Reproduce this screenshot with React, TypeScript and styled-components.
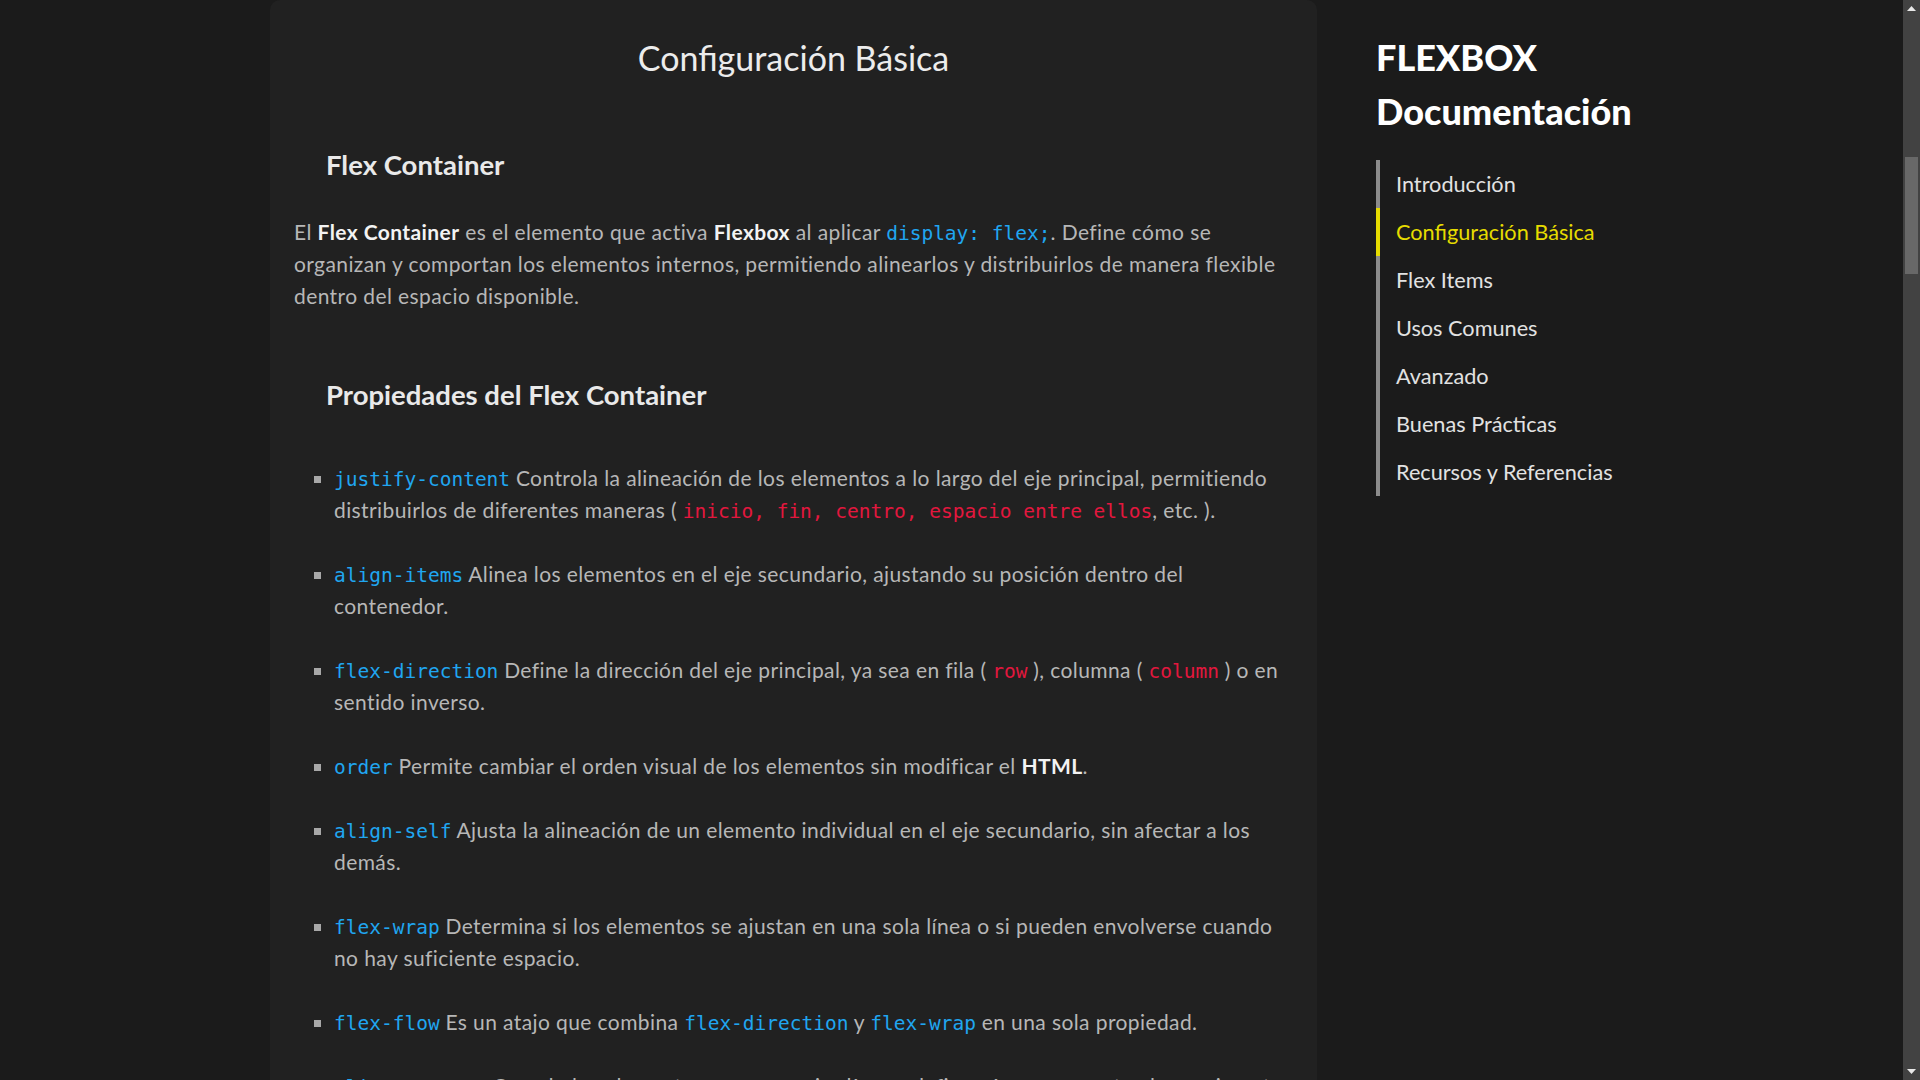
import React from "react";
import styled, { createGlobalStyle } from "styled-components";

const GlobalStyle = createGlobalStyle`
  html, body {
    margin: 0;
    padding: 0;
    background: #1b1b1b;
    overflow: hidden;
  }
  body {
    font-family: Lato, "Noto Sans", sans-serif;
  }
`;

const Page = styled.div`
  display: flex;
  height: 100vh;
  width: 100vw;
  overflow: hidden;
  background: #1b1b1b;
`;

const Main = styled.main`
  flex: 0 0 auto;
  padding-left: 270px;
`;

const Panel = styled.article`
  width: 1047px;
  box-sizing: border-box;
  min-height: 100vh;
  background: #212121;
  border-radius: 10px 10px 0 0;
  padding: 36px 24px 0 24px;
`;

const Title = styled.h2`
  margin: 0;
  text-align: center;
  font-family: Lato, sans-serif;
  font-weight: 400;
  font-size: 34px;
  line-height: 43px;
  color: #ececec;
`;

const SubTitle = styled.h3<{ $gap: number }>`
  margin: ${(p) => p.$gap}px 0 0 32px;
  font-family: Lato, sans-serif;
  font-weight: 700;
  font-size: 27.5px;
  line-height: 35px;
  color: #e9e9e9;
`;

const Paragraph = styled.p`
  margin: 34px 0 0 0;
  font-size: 21px;
  letter-spacing: 0.4px;
  line-height: 32px;
  color: #b7b7b7;
`;

const Strong = styled.strong`
  font-weight: 700;
  color: #f3f3f3;
`;

const Code = styled.code<{ $tone?: "blue" | "red" }>`
  font-family: "DejaVu Sans Mono", "Liberation Mono", monospace;
  font-size: 19.5px;
  line-height: 1;
  letter-spacing: 0;
  color: ${(p) => (p.$tone === "red" ? "#e3173e" : "#20a6f0")};
`;

const List = styled.ul`
  margin: 50px 0 0 0;
  padding-left: 40px;
  list-style: square;
`;

const Item = styled.li`
  font-size: 21px;
  letter-spacing: 0.4px;
  line-height: 32px;
  color: #b7b7b7;
  margin-bottom: 32px;
  &::marker {
    color: #a8a8a8;
    font-size: 20px;
  }
`;

const Sidebar = styled.aside`
  flex: 1 1 auto;
  margin-left: 59px;
  padding-top: 30px;
`;

const Brand = styled.h1`
  margin: 0;
  font-family: Lato, sans-serif;
  font-weight: 900;
  font-size: 36px;
  line-height: 54px;
  color: #ffffff;
`;

const Nav = styled.nav`
  margin-top: 22px;
  display: flex;
  flex-direction: column;
`;

const NavLink = styled.a<{ $active?: boolean }>`
  display: flex;
  align-items: center;
  height: 48px;
  padding-left: 16px;
  border-left: 4px solid ${(p) => (p.$active ? "#e6dc00" : "#8c8c8c")};
  font-size: 21.7px;
  color: ${(p) => (p.$active ? "#e6dc00" : "#e2e2e2")};
  text-decoration: none;
  width: max-content;
`;

const ScrollTrack = styled.div`
  flex: 0 0 17px;
  background: #424242;
  display: flex;
  flex-direction: column;
  align-items: center;
`;

const ArrowButton = styled.div`
  height: 17px;
  width: 17px;
  display: flex;
  align-items: center;
  justify-content: center;
`;

const Thumb = styled.div`
  margin-top: 140px;
  width: 13px;
  height: 117px;
  background: #686868;
`;

const Spacer = styled.div`
  flex: 1;
`;

const navItems = [
  "Introducción",
  "Configuración Básica",
  "Flex Items",
  "Usos Comunes",
  "Avanzado",
  "Buenas Prácticas",
  "Recursos y Referencias",
];

export default function App() {
  return (
    <>
      <GlobalStyle />
      <Page>
        <Main>
          <Panel>
            <Title>Configuración Básica</Title>
            <SubTitle $gap={68}>Flex Container</SubTitle>
            <Paragraph>
              El <Strong>Flex Container</Strong> es el elemento que activa{" "}
              <Strong>Flexbox</Strong> al aplicar <Code>display: flex;</Code>. Define cómo se
              organizan y comportan los elementos internos, permitiendo alinearlos y distribuirlos
              de manera flexible dentro del espacio disponible.
            </Paragraph>
            <SubTitle $gap={65}>Propiedades del Flex Container</SubTitle>
            <List>
              <Item>
                <Code>justify-content</Code> Controla la alineación de los elementos a lo largo del
                eje principal, permitiendo distribuirlos de diferentes maneras ({" "}
                <Code $tone="red">inicio, fin, centro, espacio entre ellos</Code>, etc. ).
              </Item>
              <Item>
                <Code>align-items</Code> Alinea los elementos en el eje secundario, ajustando su
                posición dentro del contenedor.
              </Item>
              <Item>
                <Code>flex-direction</Code> Define la dirección del eje principal, ya sea en fila ({" "}
                <Code $tone="red">row</Code> ), columna ( <Code $tone="red">column</Code> ) o en
                sentido inverso.
              </Item>
              <Item>
                <Code>order</Code> Permite cambiar el orden visual de los elementos sin modificar el{" "}
                <Strong>HTML</Strong>.
              </Item>
              <Item>
                <Code>align-self</Code> Ajusta la alineación de un elemento individual en el eje
                secundario, sin afectar a los demás.
              </Item>
              <Item>
                <Code>flex-wrap</Code> Determina si los elementos se ajustan en una sola línea o si
                pueden envolverse cuando no hay suficiente espacio.
              </Item>
              <Item>
                <Code>flex-flow</Code> Es un atajo que combina <Code>flex-direction</Code> y{" "}
                <Code>flex-wrap</Code> en una sola propiedad.
              </Item>
              <Item>
                <Code>align-content</Code> Cuando los elementos ocupan varias líneas, define cómo se
                reparte el espacio entre las múltiples filas.
              </Item>
            </List>
          </Panel>
        </Main>
        <Sidebar>
          <Brand>
            FLEXBOX
            <br />
            Documentación
          </Brand>
          <Nav>
            {navItems.map((label) => (
              <NavLink key={label} href="#" $active={label === "Configuración Básica"}>
                {label}
              </NavLink>
            ))}
          </Nav>
        </Sidebar>
        <ScrollTrack>
          <ArrowButton>
            <svg width="9" height="5" viewBox="0 0 9 5">
              <path d="M0 5 L4.5 0 L9 5 Z" fill="#e8e8e8" />
            </svg>
          </ArrowButton>
          <Thumb />
          <Spacer />
          <ArrowButton>
            <svg width="9" height="5" viewBox="0 0 9 5">
              <path d="M0 0 L4.5 5 L9 0 Z" fill="#e8e8e8" />
            </svg>
          </ArrowButton>
        </ScrollTrack>
      </Page>
    </>
  );
}
